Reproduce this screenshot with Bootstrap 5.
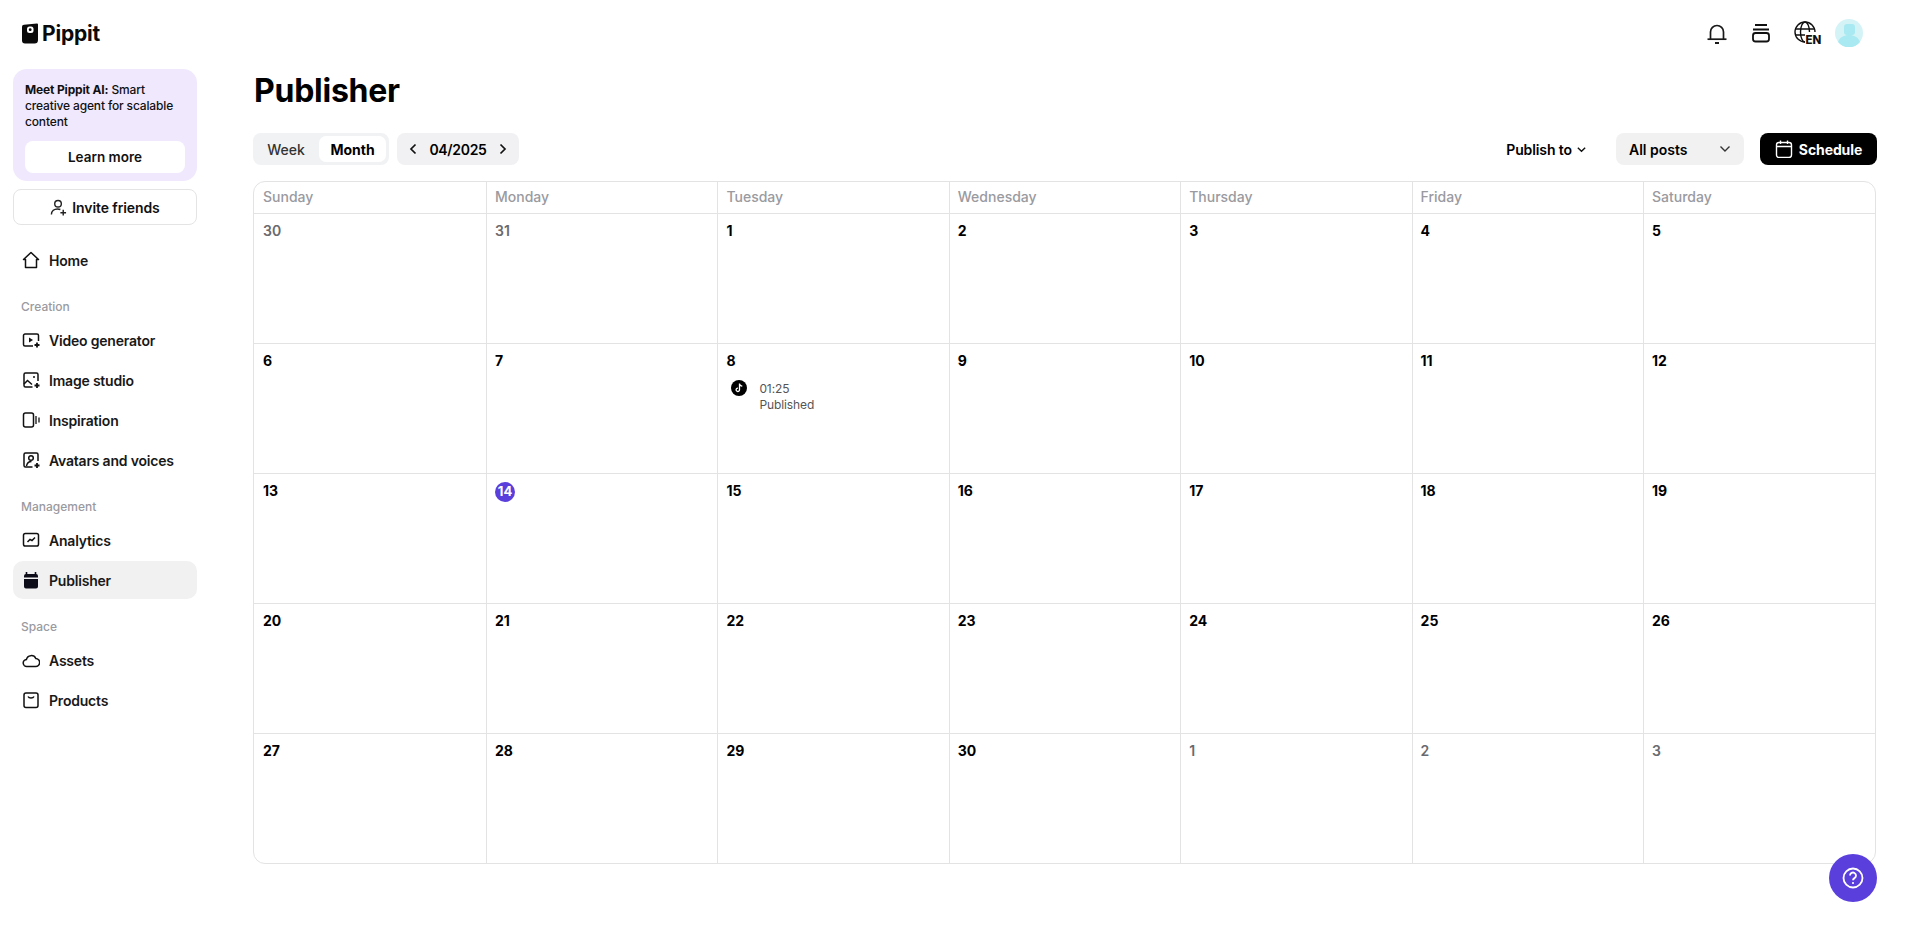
<!DOCTYPE html>
<html lang="en"><head><meta charset="utf-8"><title>Publisher</title>
<link href="https://cdn.jsdelivr.net/npm/bootstrap@5.3.0/dist/css/bootstrap.min.css" rel="stylesheet">
<style>
html,body{height:100%;overflow:hidden}
body{font-family:Inter,"Liberation Sans",sans-serif;color:#000;background:#fff;font-size:14px}
.topbar{height:69px;padding:0 53px 3px 22px}
.brand{font-size:21px;font-weight:700;letter-spacing:-.2px;gap:4px;line-height:1;color:#0a0a0a}
.ic-card{margin-left:22px}
.ic-globe{margin-left:23px}
.ic-av{margin-left:11px}
.side{width:210px;flex:none;padding:0 13px}
.promo{background:#f0e8fd;border-radius:14px;height:112px;padding:13px 12px;font-size:12px;line-height:16px;font-weight:500;color:#111;letter-spacing:-.15px}
.promo b{font-weight:700}
.learn{height:32px;background:#fff;border-radius:8px;margin-top:11px;font-weight:600;font-size:13.5px;color:#111;letter-spacing:0}
.invite{height:36px;border:1px solid #e4e4e4;border-radius:8px;margin-top:8px;font-weight:600;font-size:14px;gap:5px;color:#111;letter-spacing:-.1px}
.nav-it{height:38px;margin-bottom:2px;border-radius:10px;padding-left:9px;gap:9px;font-weight:600;font-size:14px;color:#181818;letter-spacing:-.2px}
.nav-it svg{flex:none}
.nav-it.on{background:#f1f1f1}
.sec{font-size:12px;font-weight:500;color:#9a9a9f;padding-left:8px;height:16px;line-height:16px;margin:20px 0 6px}
.home{margin-top:16px}
.main{flex:1;padding:0 39px 0 43px;margin-top:-69px;padding-top:69px;min-width:0}
.ttl{font-size:32px;line-height:44px;font-weight:700;margin:0 0 0 1px;letter-spacing:-.25px}
.tools{margin-top:20px;height:32px}
.pill{border-radius:8px;height:32px;font-size:14px;background:#f1f1f3}
.seg{padding:3px;width:136px;margin-right:8px;background:#f1f2f4}
.seg span{height:26px;border-radius:7px;font-weight:500;color:#333}
.seg .wk{width:63px;padding-right:3px}
.seg .mo{flex:1;background:#fff;color:#000;font-weight:700}
.dt{width:122px;font-weight:600;gap:10px;justify-content:center;letter-spacing:-.3px}
.pub{font-weight:600;gap:4px;margin-right:29px;letter-spacing:-.1px}
.allp{width:128px;background:#f1f1f1;padding:0 13px;font-weight:600;margin-right:16px}
.sch{width:117px;height:32px;background:#000;color:#fff;border-radius:8px;font-weight:700;gap:6px;font-size:14px;letter-spacing:-.1px}
.cal{margin-top:16px;display:grid;grid-template-columns:233px repeat(5,231.4px) 1fr;grid-template-rows:32px repeat(4,130px) 129px;border:1px solid #e3e3e3;border-radius:12px;width:1623px;overflow:hidden}
.hd{font-size:14px;font-weight:500;color:#9a9a9f;padding-left:8px;line-height:30px;border-bottom:1px solid #e3e3e3;border-right:1px solid #e3e3e3}
.cl{border-bottom:1px solid #e3e3e3;border-right:1px solid #e3e3e3;padding:7px 8px;font-size:14px;line-height:19px;font-weight:700}
.cal>:nth-child(7n+1){padding-left:9px}
.cal>:nth-child(7n){border-right:0}
.cal>:nth-last-child(-n+7){border-bottom:0}
.cl.mut{color:#6a6a6e;font-weight:600}
.today{display:inline-flex;width:20px;height:20px;border-radius:50%;background:#5b3fdc;color:#fff;align-items:center;justify-content:center;font-size:13px}
.ev{margin-top:11px;margin-left:5px;gap:12px;font-size:12px;line-height:16px;font-weight:400;color:#555;letter-spacing:-.1px}
.tk{width:16px;height:16px;flex:none;margin-top:-1px}
.help{position:fixed;left:1829px;top:854px;width:48px;height:48px;border-radius:50%;background:#5b3fdc}
</style></head><body>
<div class="topbar d-flex align-items-center justify-content-between">
 <div class="brand d-flex align-items-center">
  <svg width="16" height="21" viewBox="0 0 16 21"><path d="M2 1.800 15 0.500a1 1 0 0 1 1 1V17a3.500 3.500 0 0 1-3.500 3.500H3a3 3 0 0 1-3-3V3.800a2 2 0 0 1 2-2z" fill="#0a0a0a"/><rect x="5" y="3.500" width="6.500" height="6.500" rx="2.500" fill="#fff"/><circle cx="8.200" cy="6.700" r="1.400" fill="#0a0a0a"/></svg>
  <span>Pippit</span>
 </div>
 <div class="d-flex align-items-center">
  <svg width="24" height="24" viewBox="0 0 24 24" fill="none" stroke="#1a1a1a" stroke-width="1.700"><path d="M5.500 18V11a6.500 6.500 0 0 1 13 0v7"/><path d="M2.500 18.200h19"/><path d="M10 22h4" stroke-width="2"/></svg>
  <svg class="ic-card" width="20" height="20" viewBox="0 0 20 20" fill="none" stroke="#111" stroke-width="1.800"><path d="M4 2h12M2 6.500h16"/><rect x="2" y="10" width="16" height="8.500" rx="2.500"/></svg>
  <svg class="ic-globe" width="30" height="24" viewBox="0 0 30 24" fill="none" stroke="#111" stroke-width="1.400"><circle cx="11" cy="11" r="10"/><ellipse cx="11" cy="11" rx="4.500" ry="10"/><path d="M1 8h20M1 14h12"/><rect x="11" y="11" width="19" height="13" fill="#fff" stroke="none"/><text x="11.500" y="22.500" font-family="Inter,Liberation Sans,sans-serif" font-size="11.500" font-weight="800" fill="#111" stroke="none">EN</text></svg>
  <svg class="ic-av" width="28" height="28" viewBox="0 0 28 28"><circle cx="14" cy="14" r="14" fill="#d4f3f7"/><rect x="9" y="5" width="11" height="11" rx="3" fill="#a9e9f1"/><path d="M3 23c2-5 6-7 11-7s9 2 11 7a14 14 0 0 1-22 0z" fill="#a9e9f1"/></svg>
 </div>
</div>
<div class="d-flex">
 <aside class="side">
  <div class="promo"><div><b>Meet Pippit AI:</b> Smart creative agent for scalable content</div><div class="learn d-flex align-items-center justify-content-center">Learn more</div></div>
  <div class="invite d-flex align-items-center justify-content-center">
   <svg width="17" height="17" viewBox="0 0 18 18" fill="none" stroke="#222" stroke-width="1.500"><circle cx="8.500" cy="5" r="3.500"/><path d="M1.500 16.500c0-4 3-6 6.500-6 1 0 2 .2 3 .6M14 11.500v6M11 14.500h6"/></svg>
   Invite friends</div>
  <div class="nav-it home d-flex align-items-center"><svg width="18" height="18" viewBox="0 0 18 18" fill="none" stroke="#111" stroke-width="1.500" stroke-linejoin="round"><path d="M1.500 8.500 9 1.500l7.500 7H14.500v8h-11v-8z"/></svg>Home</div>
  <div class="sec">Creation</div>
  <div class="nav-it d-flex align-items-center"><svg width="18" height="18" viewBox="0 0 18 18" fill="none" stroke="#111" stroke-width="1.500"><path d="M11 15H3a1.500 1.500 0 0 1-1.500-1.500v-9A1.500 1.500 0 0 1 3 3h12a1.500 1.500 0 0 1 1.500 1.500V10"/><path d="M7 6.500v5l4-2.500z" fill="#111" stroke="none"/><path d="M15 11.500v5M12.500 14h5" stroke-width="1.800"/></svg>Video generator</div>
  <div class="nav-it d-flex align-items-center"><svg width="18" height="18" viewBox="0 0 18 18" fill="none" stroke="#111" stroke-width="1.500"><path d="M10.500 16H3.500A1.500 1.500 0 0 1 2 14.500v-11A1.500 1.500 0 0 1 3.500 2h11A1.500 1.500 0 0 1 16 3.500V10"/><path d="M2 13l3.500-3.500 4.500 4"/><circle cx="12" cy="6" r="1" fill="#111" stroke="none"/><path d="M15 12v5M12.500 14.500h5" stroke-width="1.800"/></svg>Image studio</div>
  <div class="nav-it d-flex align-items-center"><svg width="18" height="18" viewBox="0 0 18 18" fill="none" stroke="#111" stroke-width="1.500"><rect x="1.500" y="2" width="10" height="14" rx="2"/><path d="M14 5v8M17 6.500v5" stroke-width="1.300"/></svg>Inspiration</div>
  <div class="nav-it d-flex align-items-center"><svg width="18" height="18" viewBox="0 0 18 18" fill="none" stroke="#111" stroke-width="1.500"><path d="M10.500 16H3.500A1.500 1.500 0 0 1 2 14.500v-11A1.500 1.500 0 0 1 3.500 2h11A1.500 1.500 0 0 1 16 3.500V10"/><circle cx="9" cy="7" r="2.300"/><path d="M4.500 15c.5-3 2.500-4.500 5-4.500"/><path d="M15 12v5M12.500 14.500h5" stroke-width="1.800"/></svg>Avatars and voices</div>
  <div class="sec">Management</div>
  <div class="nav-it d-flex align-items-center"><svg width="18" height="18" viewBox="0 0 18 18" fill="none" stroke="#111" stroke-width="1.500"><rect x="1.500" y="2.500" width="15" height="12.500" rx="1.800"/><path d="M5.500 11l2.500-2.500 2 1 3-3"/></svg>Analytics</div>
  <div class="nav-it on d-flex align-items-center"><svg width="18" height="18" viewBox="0 0 18 18"><path d="M4.500 1v3M13.500 1v3" stroke="#0c0c18" stroke-width="1.600"/><path d="M2 5a2 2 0 0 1 2-2h10a2 2 0 0 1 2 2v1.500H2zM2 8h14v7.500a2 2 0 0 1-2 2H4a2 2 0 0 1-2-2z" fill="#0c0c18"/></svg>Publisher</div>
  <div class="sec">Space</div>
  <div class="nav-it d-flex align-items-center"><svg width="18" height="18" viewBox="0 0 18 18" fill="none" stroke="#111" stroke-width="1.500"><path d="M5 15.500a3.500 3.500 0 0 1-.6-7A5 5 0 0 1 13.800 7.500a4 4 0 0 1-.3 8z"/></svg>Assets</div>
  <div class="nav-it d-flex align-items-center"><svg width="18" height="18" viewBox="0 0 18 18" fill="none" stroke="#111" stroke-width="1.500"><rect x="2" y="2" width="14" height="14.500" rx="2"/><path d="M6 5.500c1 2 5 2 6 0"/></svg>Products</div>
 </aside>
 <main class="main">
  <h1 class="ttl">Publisher</h1>
  <div class="tools d-flex align-items-center">
   <div class="pill seg d-flex"><span class="wk d-flex align-items-center justify-content-center">Week</span><span class="mo d-flex align-items-center justify-content-center">Month</span></div>
   <div class="pill dt d-flex align-items-center"><svg width="12" height="12" viewBox="0 0 12 12" fill="none" stroke="#111" stroke-width="1.700"><path d="M8.500 1.500 4 6l4.500 4.500"/></svg>04/2025<svg width="12" height="12" viewBox="0 0 12 12" fill="none" stroke="#111" stroke-width="1.700"><path d="M3.500 1.500 8 6l-4.500 4.500"/></svg></div>
   <div class="ms-auto pub d-flex align-items-center">Publish to<svg width="11" height="11" viewBox="0 0 12 12" fill="none" stroke="#111" stroke-width="1.500"><path d="M2 4l4 4 4-4"/></svg></div>
   <div class="pill allp d-flex align-items-center justify-content-between">All posts<svg width="12" height="12" viewBox="0 0 12 12" fill="none" stroke="#333" stroke-width="1.400"><path d="M1.500 3.500 6 8l4.500-4.500"/></svg></div>
   <div class="sch d-flex align-items-center justify-content-center"><svg width="18" height="18" viewBox="0 0 18 18" fill="none" stroke="#fff" stroke-width="1.400"><rect x="1.500" y="2.500" width="15" height="15" rx="2.500"/><path d="M1.500 6.500h15M5.500 .5v3.500M12.500 .5v3.500"/></svg>Schedule</div>
  </div>
  <div class="cal" id="cal"></div>
 </main>
</div>
<div class="help d-flex align-items-center justify-content-center"><svg width="22" height="22" viewBox="0 0 22 22" fill="none" stroke="#fff" stroke-width="1.800"><circle cx="11" cy="11" r="9.500"/><path d="M8 8.500a3 3 0 1 1 4.500 2.600c-1 .6-1.500 1.200-1.500 2.200"/><circle cx="11" cy="16" r="1.100" fill="#fff" stroke="none"/></svg></div>
<script>
var h=['Sunday','Monday','Tuesday','Wednesday','Thursday','Friday','Saturday'],s='';
h.forEach(function(d){s+='<div class="hd">'+d+'</div>'});
var days=[[30,1],[31,1]];for(var i=1;i<=30;i++)days.push([i,0]);for(i=1;i<=3;i++)days.push([i,1]);
days.forEach(function(d){
 var c=d[0],inner=c;
 if(!d[1]&&c==14)inner='<span class="today">14</span>';
 if(!d[1]&&c==8)inner='8<div class="ev d-flex"><svg class="tk" viewBox="0 0 16 16"><circle cx="8" cy="8" r="8"/><path d="M8.500 3.500v6.300a1.700 1.700 0 1 1-1.500-1.700M8.500 3.500c.2 1.500 1.200 2.500 2.800 2.700" fill="none" stroke="#fff" stroke-width="1.300"/></svg><div>01:25<br>Published</div></div>';
 s+='<div class="cl'+(d[1]?' mut':'')+'">'+inner+'</div>';
});
document.getElementById('cal').innerHTML=s;
</script>
<script src="https://cdn.jsdelivr.net/npm/bootstrap@5.3.0/dist/js/bootstrap.bundle.min.js"></script>
</body></html>
